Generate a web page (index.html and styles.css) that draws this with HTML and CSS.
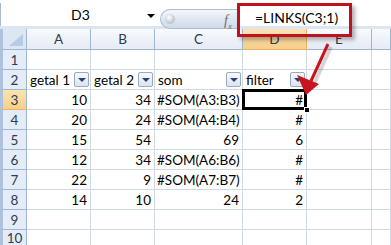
FILE: index.html
```html
<!DOCTYPE html>
<html lang="nl">
<head>
  <meta charset="UTF-8" />
  <title>LINKS voorbeeld</title>
  <link rel="stylesheet" href="styles.css">
</head>
<body>

  <div class="formulabar">
    <div class="namebox">
      <span class="namebox-ref">D3</span>
      <span class="namebox-arrow"></span>
    </div>
    <div class="fx-pill"><span class="fx-knob"></span></div>
    <div class="fx-label">f<sub>x</sub></div>
    <div class="formula-input">=LINKS(C3;1)</div>
  </div>

  <div class="sheet">
    <div class="hd corner"><span class="corner-tri"></span></div>
    <div class="hd">A</div>
    <div class="hd">B</div>
    <div class="hd">C</div>
    <div class="hd hd-sel">D</div>
    <div class="hd">E</div>
    <div class="hd"></div>

    <div class="rh">1</div>
    <div class="c"></div><div class="c"></div><div class="c"></div><div class="c"></div><div class="c"></div><div class="c"></div>

    <div class="rh">2</div>
    <div class="c f">getal 1<span class="filter-btn"></span></div>
    <div class="c f">getal 2<span class="filter-btn"></span></div>
    <div class="c f">som<span class="filter-btn"></span></div>
    <div class="c f">filter<span class="filter-btn"></span></div>
    <div class="c"></div><div class="c"></div>

    <div class="rh rh-sel">3</div>
    <div class="c n">10</div><div class="c n">34</div><div class="c t">#SOM(A3:B3)</div>
    <div class="c n active">#<span class="fill-handle"></span></div><div class="c"></div><div class="c"></div>

    <div class="rh">4</div>
    <div class="c n">20</div><div class="c n">24</div><div class="c t">#SOM(A4:B4)</div>
    <div class="c n">#</div><div class="c"></div><div class="c"></div>

    <div class="rh">5</div>
    <div class="c n">15</div><div class="c n">54</div><div class="c n">69</div>
    <div class="c n">6</div><div class="c"></div><div class="c"></div>

    <div class="rh">6</div>
    <div class="c n">12</div><div class="c n">34</div><div class="c t">#SOM(A6:B6)</div>
    <div class="c n">#</div><div class="c"></div><div class="c"></div>

    <div class="rh">7</div>
    <div class="c n">22</div><div class="c n">9</div><div class="c t">#SOM(A7:B7)</div>
    <div class="c n">#</div><div class="c"></div><div class="c"></div>

    <div class="rh">8</div>
    <div class="c n">14</div><div class="c n">10</div><div class="c n">24</div>
    <div class="c n">2</div><div class="c"></div><div class="c"></div>

    <div class="rh">9</div>
    <div class="c"></div><div class="c"></div><div class="c"></div><div class="c"></div><div class="c"></div><div class="c"></div>

    <div class="rh">10</div>
    <div class="c"></div><div class="c"></div><div class="c"></div><div class="c"></div><div class="c"></div><div class="c"></div>
  </div>

  <!-- rode markering over de formulebalk -->
  <div class="callout-box"></div>
  <svg class="callout-arrow" width="391" height="245" viewBox="0 0 391 245">
    <line x1="331" y1="47" x2="314" y2="84" stroke="rgba(0,0,0,0.16)" stroke-width="4" />
    <line x1="328" y1="44" x2="311" y2="81" stroke="#c8141e" stroke-width="3" />
    <polygon points="306,95 297,75 319,84" fill="#c8141e" />
  </svg>

</body>
</html>
```

FILE: styles.css
```css
*, *::before, *::after {
  box-sizing: border-box;
}

body {
  margin: 0;
  width: 391px; height: 245px;
  overflow: hidden;
  background: #fff;
  font-family: Lato, 'Liberation Sans', sans-serif;
  font-size: 13.5px;
  color: #000;
  position: relative;
}

/* ===== Formulebalk ===== */
.formulabar {
  display: flex;
  height: 32px;
  padding-top: 3px;
  background: #fff;
  border-top: 3px solid #d5e1f0;
  border-bottom: 3px solid #dce6f3;
  margin-top: -3px;
}
.namebox {
  width: 160px;
  display: flex; align-items: center; justify-content: center;
  position: relative;
  border-left: 1px solid #a7bbd6;
}
.namebox-ref { font-size: 14px; }
.namebox-arrow {
  position: absolute; right: 5px; top: 11px;
  border-left: 4px solid transparent; border-right: 4px solid transparent;
  border-top: 4px solid #000;
}
.fx-pill {
  width: 64px; height: 20px; margin-top: 6px;
  border-radius: 10px 0 0 10px;
  background: linear-gradient(#f4f7fb, #dfe7f2 50%, #cfdbea);
  border: 1px solid #a9bcd5; border-right: none;
  position: relative;
}
.fx-knob {
  position: absolute; left: 4px; top: 4px;
  width: 10px; height: 10px; border-radius: 50%;
  background: radial-gradient(circle at 40% 35%, #fff, #b9c2cc 70%);
}
.fx-label {
  width: 14px; padding-top: 5px;
  font-family: 'Liberation Serif', serif; font-style: italic;
  font-size: 14px; color: #6d6d6d;
  background: linear-gradient(#f4f7fb, #dfe7f2 50%, #cfdbea);
  height: 20px; margin-top: 6px; line-height: 12px;
  border-top: 1px solid #a9bcd5; border-bottom: 1px solid #a9bcd5;
}
.fx-label sub { font-size: 9px; }
.formula-input {
  flex: 1;
  padding: 6px 0 0 16px;
  font-size: 14px;
  border-left: 1px solid #a9bcd5;
}

/* ===== Werkblad ===== */
.sheet {
  display: grid;
  grid-template-columns: 27px 64px 64px 88px 64px 65px 1fr;
  grid-template-rows: 21px repeat(9, 20px);
}
.hd {
  background: linear-gradient(#f8fafd, #e4ebf5);
  border-right: 1px solid #9eb6ce;
  border-bottom: 1px solid #9eb6ce;
  color: #2d3a50;
  display: flex; align-items: center; justify-content: center;
  font-size: 13.5px;
}
.hd-sel {
  background: linear-gradient(#fbe2b3, #f6cf8a);
  border-color: #f2b25e;
}
.corner {
  background: #dde7f4;
  position: relative;
  border-left: 3px solid #aec2dd;
}
.corner-tri {
  position: absolute; right: 3px; bottom: 3px;
  border-left: 14px solid transparent;
  border-bottom: 12px solid #b7cbe5;
}
.rh {
  background: #e4ecf7;
  border-left: 3px solid #aec2dd;
  border-right: 1px solid #9eb6ce;
  border-bottom: 1px solid #9eb6ce;
  color: #2d3a50;
  display: flex; align-items: center; justify-content: center;
  font-size: 13.5px;
}
.rh-sel {
  background: linear-gradient(#fbe2b3, #f6cf8a);
  border-bottom-color: #f2b25e;
}
.c {
  border-right: 1px solid #d0d7e5;
  border-bottom: 1px solid #d0d7e5;
  display: flex; align-items: center;
  padding: 0 3px 0 2px;
  white-space: nowrap;
  position: relative;
}
.c.n { justify-content: flex-end; }
.c.t { padding-left: 2px; }
.c.f { padding: 0 1px 0 3px; }

.filter-btn {
  margin-left: auto;
  width: 15px; height: 15px;
  border: 1px solid #9aa9bd;
  border-radius: 2px;
  background: linear-gradient(#f7f9fc, #dce4ef);
  position: relative;
}
.filter-btn::after {
  content: '';
  position: absolute; left: 3px; top: 5px;
  border-left: 4px solid transparent; border-right: 4px solid transparent;
  border-top: 4px solid #24417a;
}

.active::after {
  content: '';
  position: absolute;
  top: -1px; left: -1px; right: -1px; bottom: -1px;
  border: 3px solid #000;
}
.fill-handle {
  position: absolute; right: -4px; bottom: -4px;
  width: 6px; height: 6px;
  background: #000; border: 1px solid #fff;
  z-index: 2;
}

/* ===== Markering ===== */
.callout-box {
  position: absolute;
  left: 237px; top: 3px;
  width: 115px; height: 34px;
  border: 3px solid #c0121c;
  box-shadow: 3px 3px 4px rgba(0,0,0,0.3);
}
.callout-arrow {
  position: absolute; left: 0; top: 0;
  pointer-events: none;
}
```
